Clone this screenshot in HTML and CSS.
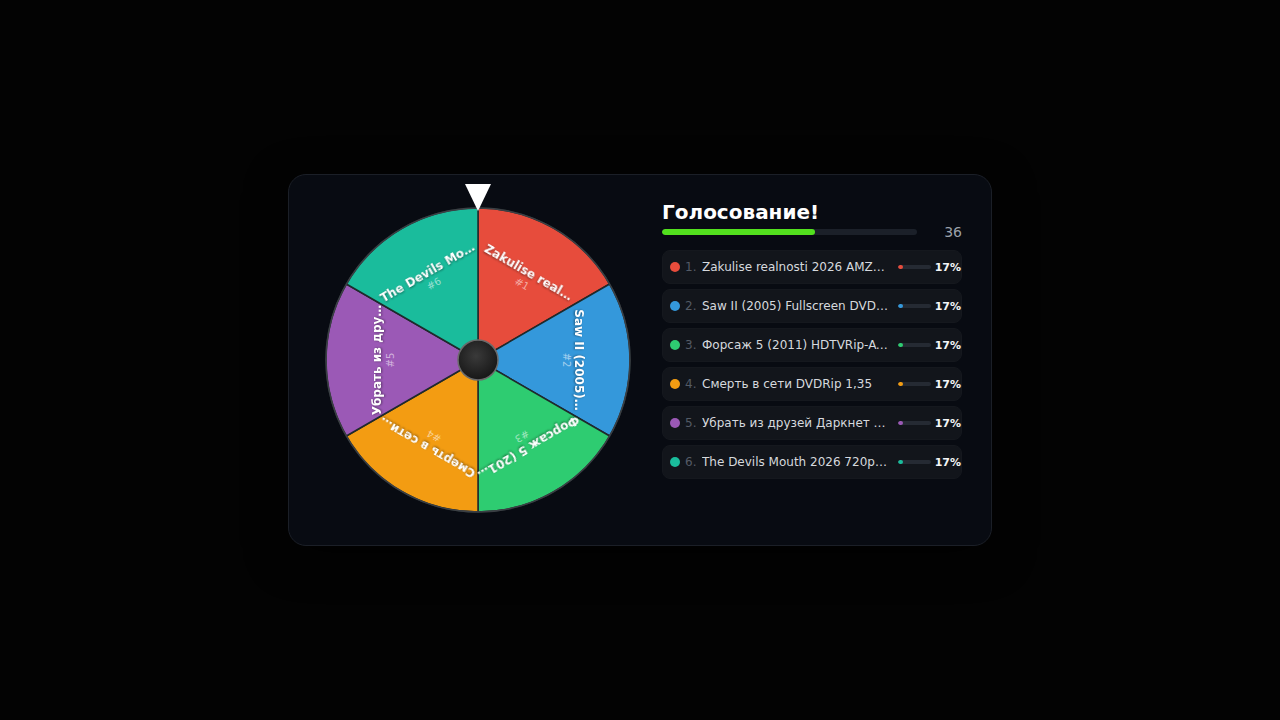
FILE: index.html
```html
<!DOCTYPE html>
<html lang="ru">
<head>
    <meta charset="UTF-8">
    <meta name="viewport" content="width=device-width, initial-scale=1.0">
    <title>Голосование</title>
    <link rel="stylesheet" href="styles.css">
</head>
<body>
    <div class="poll-card">
        <div class="wheel-box">
            <div class="wheel-pointer"></div>
            <svg class="wheel" width="320" height="320" viewBox="0 0 320 320">
                <g class="slices">
                    <path d="M160 160 L160 8 A152 152 0 0 1 291.64 84 Z" fill="#e74c3c"/>
                    <path d="M160 160 L291.64 84 A152 152 0 0 1 291.64 236 Z" fill="#3498db"/>
                    <path d="M160 160 L291.64 236 A152 152 0 0 1 160 312 Z" fill="#2ecc71"/>
                    <path d="M160 160 L160 312 A152 152 0 0 1 28.36 236 Z" fill="#f39c12"/>
                    <path d="M160 160 L28.36 236 A152 152 0 0 1 28.36 84 Z" fill="#9b59b6"/>
                    <path d="M160 160 L28.36 84 A152 152 0 0 1 160 8 Z" fill="#1abc9c"/>
                </g>
                <circle class="rim" cx="160" cy="160" r="152"/>

                <!-- подписи секторов: радиально, по касательной -->
                <g transform="translate(160 160) rotate(-60) translate(101 0) rotate(90)">
                    <text class="seg-label">Zakulise real…</text>
                    <text class="seg-num" y="13">#1</text>
                </g>
                <g transform="translate(160 160) rotate(0) translate(101 0) rotate(90)">
                    <text class="seg-label">Saw II (2005)…</text>
                    <text class="seg-num" y="13">#2</text>
                </g>
                <g transform="translate(160 160) rotate(60) translate(101 0) rotate(90)">
                    <text class="seg-label">Форсаж 5 (201…</text>
                    <text class="seg-num" y="13">#3</text>
                </g>
                <g transform="translate(160 160) rotate(120) translate(101 0) rotate(90)">
                    <text class="seg-label">Смерть в сети…</text>
                    <text class="seg-num" y="13">#4</text>
                </g>
                <g transform="translate(160 160) rotate(180) translate(101 0) rotate(90)">
                    <text class="seg-label">Убрать из дру…</text>
                    <text class="seg-num" y="13">#5</text>
                </g>
                <g transform="translate(160 160) rotate(240) translate(101 0) rotate(90)">
                    <text class="seg-label">The Devils Mo…</text>
                    <text class="seg-num" y="13">#6</text>
                </g>

                <defs>
                    <radialGradient id="hubFill" cx="45%" cy="40%" r="65%">
                        <stop offset="0" stop-color="#3a3a3a"/>
                        <stop offset="1" stop-color="#141414"/>
                    </radialGradient>
                </defs>
                <circle cx="160" cy="160" r="20" fill="url(#hubFill)" stroke="#6b6b6b" stroke-width="1.5"/>
            </svg>
        </div>

        <div class="poll-side">
            <h2 class="poll-title">Голосование!</h2>
            <div class="poll-progress">
                <div class="progress-track"><div class="progress-fill" style="width: 60%"></div></div>
                <span class="progress-count">36</span>
            </div>

            <ul class="poll-list">
                <li class="poll-item">
                    <span class="dot" style="background: #e74c3c"></span>
                    <span class="num">1.</span>
                    <span class="name">Zakulise realnosti 2026 AMZN WEB-DL 1080p</span>
                    <span class="mini-track"><span class="mini-fill" style="width: 17%; background: #e74c3c"></span></span>
                    <span class="pct">17%</span>
                </li>
                <li class="poll-item">
                    <span class="dot" style="background: #3498db"></span>
                    <span class="num">2.</span>
                    <span class="name">Saw II (2005) Fullscreen DVDRip</span>
                    <span class="mini-track"><span class="mini-fill" style="width: 17%; background: #3498db"></span></span>
                    <span class="pct">17%</span>
                </li>
                <li class="poll-item">
                    <span class="dot" style="background: #2ecc71"></span>
                    <span class="num">3.</span>
                    <span class="name">Форсаж 5 (2011) HDTVRip-AVC</span>
                    <span class="mini-track"><span class="mini-fill" style="width: 17%; background: #2ecc71"></span></span>
                    <span class="pct">17%</span>
                </li>
                <li class="poll-item">
                    <span class="dot" style="background: #f39c12"></span>
                    <span class="num">4.</span>
                    <span class="name">Смерть в сети DVDRip 1,35</span>
                    <span class="mini-track"><span class="mini-fill" style="width: 17%; background: #f39c12"></span></span>
                    <span class="pct">17%</span>
                </li>
                <li class="poll-item">
                    <span class="dot" style="background: #9b59b6"></span>
                    <span class="num">5.</span>
                    <span class="name">Убрать из друзей Даркнет (2018)</span>
                    <span class="mini-track"><span class="mini-fill" style="width: 17%; background: #9b59b6"></span></span>
                    <span class="pct">17%</span>
                </li>
                <li class="poll-item">
                    <span class="dot" style="background: #1abc9c"></span>
                    <span class="num">6.</span>
                    <span class="name">The Devils Mouth 2026 720p WEB</span>
                    <span class="mini-track"><span class="mini-fill" style="width: 17%; background: #1abc9c"></span></span>
                    <span class="pct">17%</span>
                </li>
            </ul>
        </div>
    </div>
</body>
</html>
```

FILE: styles.css
```css
body {
    font-family: 'DejaVu Sans', Verdana, sans-serif;
    background-color: #030303;
    display: flex;
    justify-content: center;
    align-items: center;
    min-height: 100vh;
    margin: 0;
}

.poll-card {
    box-sizing: border-box;
    width: 704px;
    height: 372px;
    padding: 25px 29px;
    display: flex;
    align-items: flex-start;
    gap: 24px;
    background-color: #080b12;
    border: 1px solid #1b1f27;
    border-radius: 18px;
    box-shadow: 0 10px 40px rgba(0, 0, 0, 0.6);
}

/* колесо */
.wheel-box {
    position: relative;
    width: 320px;
    height: 320px;
    flex-shrink: 0;
}

.wheel {
    display: block;
}

.wheel-pointer {
    position: absolute;
    top: -16px;
    left: 50%;
    transform: translateX(-50%);
    width: 0;
    height: 0;
    border-left: 13px solid transparent;
    border-right: 13px solid transparent;
    border-top: 27px solid #ffffff;
    z-index: 2;
}

.slices path {
    stroke: #1f2a2c;
    stroke-width: 1.5;
    stroke-linejoin: round;
}

.rim {
    fill: none;
    stroke: #3b3f44;
    stroke-width: 1.5;
}

.seg-label {
    font-family: 'DejaVu Sans', sans-serif;
    font-size: 12px;
    font-weight: bold;
    fill: #ffffff;
    text-anchor: middle;
    dominant-baseline: central;
    filter: drop-shadow(0 1px 1px rgba(0, 0, 0, 0.45));
}

.seg-num {
    font-family: 'DejaVu Sans', sans-serif;
    font-size: 10px;
    fill: rgba(255, 255, 255, 0.55);
    text-anchor: middle;
    dominant-baseline: central;
}

/* правая колонка */
.poll-side {
    width: 300px;
    flex-shrink: 0;
}

.poll-title {
    margin: 0;
    color: #ffffff;
    font-size: 20px;
    line-height: 24px;
    font-weight: bold;
}

.poll-progress {
    display: flex;
    align-items: center;
    height: 16px;
}

.progress-track {
    width: 255px;
    height: 6px;
    background-color: #1b2029;
    border-radius: 3px;
    overflow: hidden;
}

.progress-fill {
    height: 100%;
    background-color: #52e01e;
    border-radius: 3px;
}

.progress-count {
    margin-left: auto;
    color: #9ba1aa;
    font-size: 14px;
}

.poll-list {
    list-style: none;
    margin: 10px 0 0;
    padding: 0;
    display: flex;
    flex-direction: column;
    gap: 5px;
}

.poll-item {
    box-sizing: border-box;
    height: 34px;
    padding: 0 0 0 8px;
    display: flex;
    align-items: center;
    background-color: #12151b;
    border: 1px solid #15181e;
    border-radius: 8px;
    font-size: 12px;
}

.dot {
    width: 10px;
    height: 10px;
    border-radius: 50%;
    flex-shrink: 0;
    margin-left: -1px;
}

.num {
    width: 12px;
    margin-left: 5px;
    color: #545b66;
    flex-shrink: 0;
}

.name {
    flex: 1;
    min-width: 0;
    margin-left: 5px;
    color: #d6d9de;
    white-space: nowrap;
    overflow: hidden;
    text-overflow: ellipsis;
}

.mini-track {
    width: 33px;
    height: 4px;
    margin-left: 8px;
    background-color: #252a33;
    border-radius: 2px;
    flex-shrink: 0;
    overflow: hidden;
}

.mini-fill {
    display: block;
    height: 100%;
    border-radius: 2px;
}

.pct {
    margin-left: 4px;
    color: #f4f5f7;
    font-size: 11px;
    font-weight: bold;
    flex-shrink: 0;
}
```
